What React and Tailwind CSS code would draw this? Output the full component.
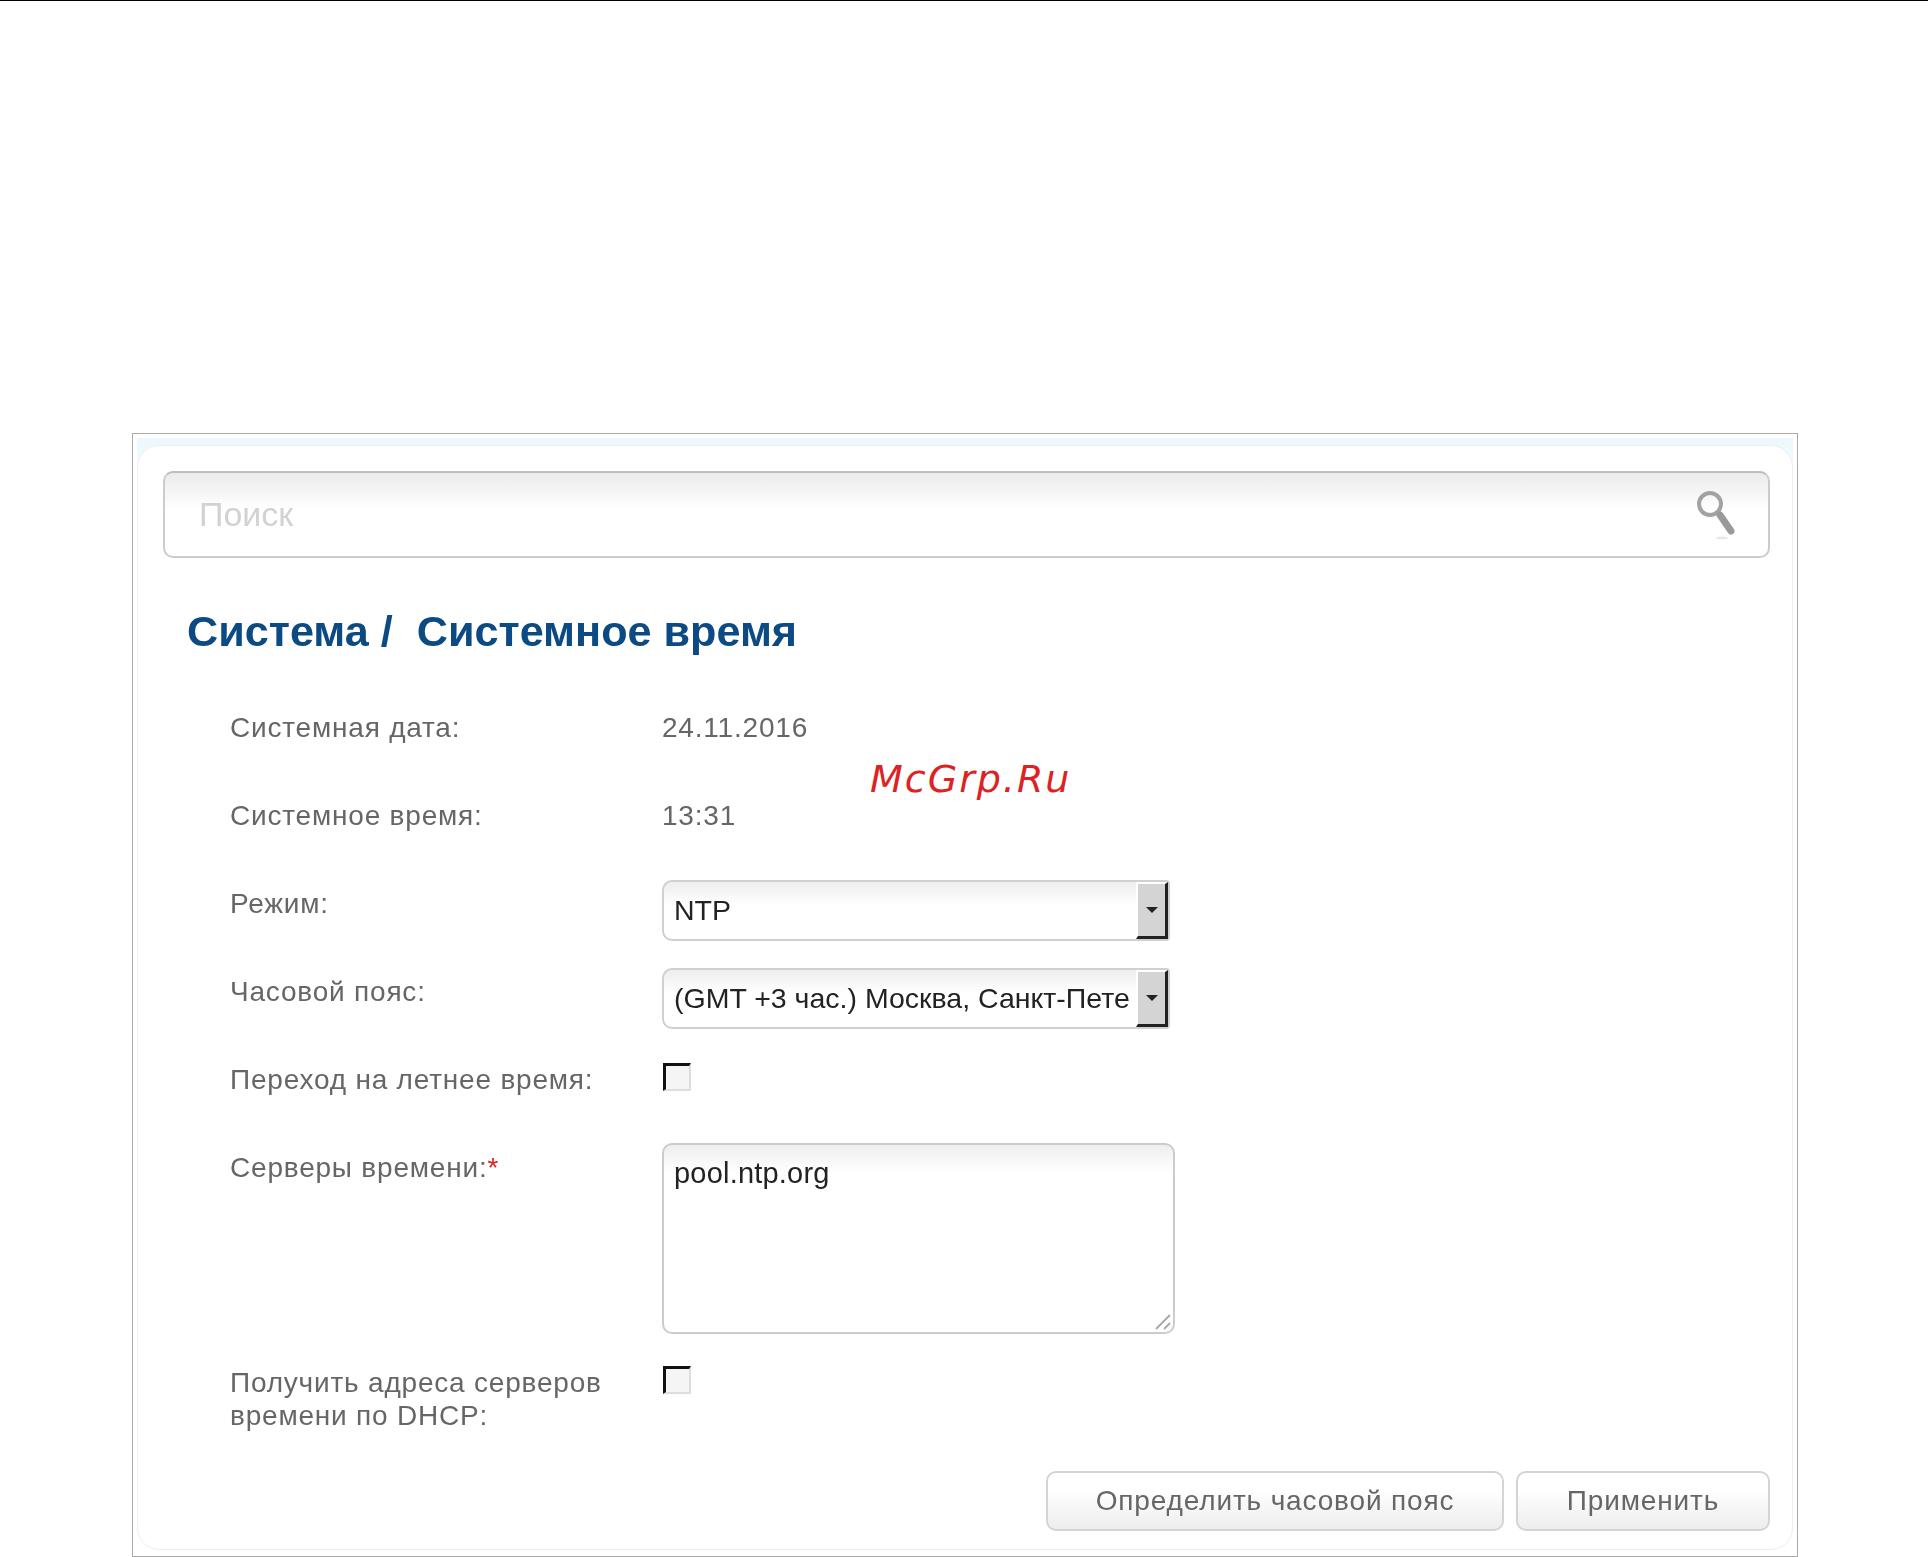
const sans = { fontFamily: '"Liberation Sans", Arial, sans-serif' };

function Label({ children, className = "" }) {
  return <div className={`text-[28px] leading-[33px] tracking-[0.8px] text-[#666] ${className}`}>{children}</div>;
}

function SelectBox({ text }) {
  return (
    <div className="flex h-[61px] w-[508px] items-stretch rounded-l-[10px] rounded-r-[4px] border-2 border-[#d0d0d0] bg-gradient-to-b from-[#eeeeee] via-white via-40% to-white">
      <div className="flex min-w-0 flex-1 items-center overflow-hidden pl-[10px] text-[28.5px] whitespace-nowrap text-[#222]">{text}</div>
      <div className="flex w-[32px] shrink-0 items-center justify-center border-t-2 border-r-[3px] border-b-[3px] border-l-2 border-t-white border-r-[#222] border-b-[#222] border-l-white bg-[#d4d4d4]">
        <div className="h-0 w-0 border-x-[6px] border-t-[6px] border-x-transparent border-t-[#222]" />
      </div>
    </div>
  );
}

function Check() {
  return <div className="ml-px h-[28px] w-[28px] border-t-[3px] border-r-2 border-b-2 border-l-[3px] border-t-[#111] border-r-[#ddd] border-b-[#ddd] border-l-[#111] bg-[#f5f5f5]" />;
}

function Row({ label, labelClass, rowClass, children }) {
  return (
    <div className={`grid grid-cols-[432px_1fr] ${rowClass}`}>
      <Label className={labelClass}>{label}</Label>
      <div>{children}</div>
    </div>
  );
}

function Btn({ children, className }) {
  return (
    <div className={`flex h-[60px] items-center justify-center rounded-[10px] border-2 border-[#d4d4d4] bg-gradient-to-b from-white via-white via-30% to-[#ededed] text-[28px] tracking-[0.85px] text-[#666] ${className}`}>
      {children}
    </div>
  );
}

export default function App() {
  return (
    <div style={sans} className="relative h-[1557px] w-full overflow-hidden bg-white">
      <div className="h-px w-full bg-black" />
      <div className="mt-[432px] ml-[132px] h-[1124px] w-[1666px] border border-[#aaaaaa] bg-white px-[4px] pt-[4px] blur-[0.5px]">
        <div className="h-[1112px] bg-gradient-to-b from-[#ecf8fc] to-white to-[60px]">
          <div className="h-[1112px] pt-[7px]">
            <div className="h-[1105px] rounded-[22px] border border-[#eeeeee] bg-white pt-[25px] pr-[22px] pl-[25px]">
              <div className="flex h-[87px] w-full items-center justify-between rounded-[10px] border-2 border-[#cccccc] border-t-[#bdbdbd] bg-gradient-to-b from-[#ececec] via-white via-45% to-white pr-[32px] pl-[34px]">
                <span className="text-[34px] text-[#d2d2d2]">Поиск</span>
                <svg width="40" height="50" viewBox="0 0 40 50" fill="none">
                  <ellipse cx="26" cy="48" rx="6" ry="1.5" fill="#e8e8e8" />
                  <circle cx="14" cy="14" r="11" stroke="#a2a2a2" strokeWidth="4" />
                  <path d="M24 25 L35 41" stroke="#9a9a9a" strokeWidth="7" strokeLinecap="round" />
                </svg>
              </div>
              <div className="mt-[43px] ml-[24px] h-[71px] whitespace-pre text-[43.2px] leading-[60px] font-bold text-[#0b4a82]">Система /  Системное время</div>
              <div className="mt-[39px] ml-[67px]">
                <Row rowClass="h-[88px]" label="Системная дата:">
                  <span className="text-[28px] leading-[33px] tracking-[0.8px] text-[#666]">24.11.2016</span>
                </Row>
                <Row rowClass="h-[81px]" label="Системное время:">
                  <span className="text-[28px] leading-[33px] tracking-[0.8px] text-[#666]">13:31</span>
                </Row>
                <Row rowClass="h-[88px]" labelClass="pt-[7px]" label="Режим:">
                  <SelectBox text="NTP" />
                </Row>
                <Row rowClass="h-[95px]" labelClass="pt-[7px]" label="Часовой пояс:">
                  <SelectBox text="(GMT +3 час.) Москва, Санкт-Пете" />
                </Row>
                <Row rowClass="h-[80px]" label="Переход на летнее время:">
                  <Check />
                </Row>
                <Row rowClass="h-[223px]" labelClass="pt-[8px]" label={<>Серверы времени:<span className="text-[#dd2222]">*</span></>}>
                  <div className="relative h-[191px] w-[513px] rounded-[10px] border-2 border-[#cccccc] bg-gradient-to-b from-[#eeeeee] via-white via-15% to-white px-[10px] pt-[11px] text-[29px] leading-[34px] tracking-[0.2px] text-[#222]">
                    pool.ntp.org
                    <svg className="absolute right-[1px] bottom-[1px]" width="18" height="18" viewBox="0 0 18 18" fill="none">
                      <path d="M2 16 L16 2 M10 16 L16 10" stroke="#aaaaaa" strokeWidth="2" />
                    </svg>
                  </div>
                </Row>
                <Row rowClass="h-[105px]" label={<>Получить адреса серверов<br />времени по DHCP:</>}>
                  <Check />
                </Row>
              </div>
              <div className="flex justify-end gap-[12px]">
                <Btn className="w-[458px]">Определить часовой пояс</Btn>
                <Btn className="w-[254px]">Применить</Btn>
              </div>
            </div>
          </div>
        </div>
      </div>
      <div style={{ fontFamily: '"DejaVu Sans", sans-serif' }} className="absolute top-[751px] left-[870px] text-[38px] tracking-[2px] text-[#dd2222] italic">McGrp.Ru</div>
    </div>
  );
}
